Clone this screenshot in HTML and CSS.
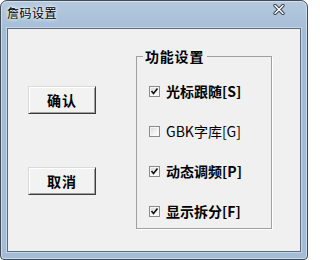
FILE: index.html
```html
<!DOCTYPE html>
<html lang="zh-CN">
<head>
<meta charset="utf-8">
<link rel="stylesheet" href="styles.css">
</head>
<body>
<div class="window">
  <div class="titlebar">
    <span class="title">詹码设置</span>
    <span class="close"><svg width="12" height="11" viewBox="0 0 12 11"><path d="M2 1.5 L10 9.5 M10 1.5 L2 9.5" stroke="#2a3440" stroke-width="3.2" stroke-linecap="round"/><path d="M2 1.5 L10 9.5 M10 1.5 L2 9.5" stroke="#ffffff" stroke-width="1.6" stroke-linecap="round"/></svg></span>
  </div>
  <div class="client">
    <div class="buttons">
      <div class="btn">确认</div>
      <div class="btn">取消</div>
    </div>
    <fieldset class="group">
      <legend class="legend">功能设置</legend>
      <div class="rows">
        <div class="row bold"><span class="cb"><svg width="9" height="9" viewBox="0 0 9 9"><path d="M1.5 4 L3.5 6.5 L7.5 1.5" fill="none" stroke="#111" stroke-width="1.6"/></svg></span><span>光标跟随[S]</span></div>
        <div class="row"><span class="cb"></span><span>GBK字库[G]</span></div>
        <div class="row bold"><span class="cb"><svg width="9" height="9" viewBox="0 0 9 9"><path d="M1.5 4 L3.5 6.5 L7.5 1.5" fill="none" stroke="#111" stroke-width="1.6"/></svg></span><span>动态调频[P]</span></div>
        <div class="row bold"><span class="cb"><svg width="9" height="9" viewBox="0 0 9 9"><path d="M1.5 4 L3.5 6.5 L7.5 1.5" fill="none" stroke="#111" stroke-width="1.6"/></svg></span><span>显示拆分[F]</span></div>
      </div>
    </fieldset>
  </div>
</div>
</body>
</html>
```
FILE: styles.css
```css
html, body {
  margin: 0;
  padding: 0;
  background: #ffffff;
}
body {
  font-family: "Noto Sans CJK SC", "Noto Sans", sans-serif;
}
.window {
  width: 308px;
  height: 260px;
  box-sizing: border-box;
  border: 1px solid #404c58;
  border-radius: 7px 7px 4px 4px;
  background: linear-gradient(180deg, #b3c9de 0%, #a4bdd6 30px, #a4bdd6 100%);
  padding: 0 6px 7px 6px;
  display: flex;
  flex-direction: column;
  box-shadow: inset 0 0 0 1px rgba(255,255,255,0.45);
}
.titlebar {
  height: 27px;
  display: flex;
  align-items: center;
  justify-content: space-between;
  padding: 0 16px 4px 0;
  box-sizing: border-box;
}
.title {
  font-size: 12px;
  color: #000;
  text-shadow: 0 0 5px #ffffff, 0 0 3px #ffffff;
  letter-spacing: 0.5px;
}
.close {
  display: flex;
  margin-top: -6px;
}
.client {
  flex: 1;
  border: 1px solid #5b6c7e;
  background: #f0f0f0;
  display: flex;
  box-shadow: 0 0 0 1px #c7d6e6;
}
.buttons {
  display: flex;
  flex-direction: column;
  gap: 53px;
  margin: 57px 0 0 20px;
}
.btn {
  width: 68px;
  height: 28px;
  box-sizing: border-box;
  border: 1px solid;
  border-color: #dadada #3c3c3c #3c3c3c #dadada;
  box-shadow: inset 1px 1px 0 #ffffff, inset -1px -1px 0 #a0a0a0;
  background: #f2f2f2;
  display: flex;
  align-items: center;
  justify-content: center;
  font-size: 14px;
  font-weight: bold;
  color: #000;
  letter-spacing: 1px;
}
.group {
  margin: 19px 0 0 40px;
  width: 136px;
  height: 181px;
  box-sizing: border-box;
  border: 1px solid #a0a0a0;
  padding: 0 0 0 6px;
  box-shadow: 1px 1px 0 #ffffff;
}
.legend {
  padding: 0 3px 0 2px;
  font-size: 14px;
  font-weight: bold;
  line-height: 17px;
  letter-spacing: 0.8px;
  color: #000;
}
.rows {
  display: flex;
  flex-direction: column;
  gap: 20px;
  padding: 16px 0 0 6px;
}
.row {
  height: 20px;
  display: flex;
  align-items: center;
  gap: 6px;
  font-size: 14px;
  color: #000;
  white-space: nowrap;
}
.row.bold {
  font-weight: bold;
}
.cb {
  width: 11px;
  height: 11px;
  box-sizing: border-box;
  border: 1px solid #8a8a8a;
  background: linear-gradient(135deg, #d4d4d4 0%, #f4f4f4 60%, #ffffff 100%);
  box-shadow: inset 0 0 0 1px #f8f8f8;
  display: flex;
  align-items: center;
  justify-content: center;
  flex: none;
}
.cb svg {
  display: block;
}
```
